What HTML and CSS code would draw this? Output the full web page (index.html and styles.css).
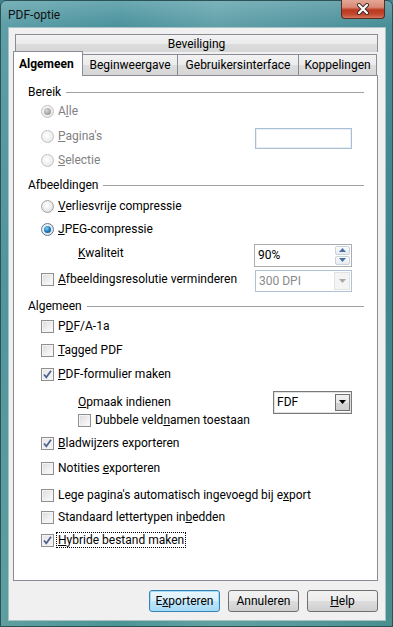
FILE: index.html
```html
<!DOCTYPE html>
<html lang="nl">
<head>
    <meta charset="UTF-8">
    <title>PDF-optie</title>
    <link rel="stylesheet" href="styles.css">
</head>
<body>
<div class="window">
    <div class="titlebar">
        <span class="title">PDF-optie</span>
        <div class="close">
            <svg width="16" height="12" viewBox="0 0 16 12">
                <path d="M4 2 L12 10 M12 2 L4 10" stroke="#3a2a2a" stroke-width="4" stroke-linecap="round"/>
                <path d="M4 2 L12 10 M12 2 L4 10" stroke="#ffffff" stroke-width="2.2" stroke-linecap="round"/>
            </svg>
        </div>
    </div>
    <div class="client">
        <div class="tabs">
            <div class="tabrow top-row">
                <div class="tab wide">Beveiliging</div>
            </div>
            <div class="tabrow">
                <div class="tab active">Algemeen</div>
                <div class="tab w95">Beginweergave</div>
                <div class="tab w121">Gebruikersinterface</div>
                <div class="tab w78">Koppelingen</div>
            </div>
        </div>
        <div class="panel">
            <div class="group"><span>Bereik</span><div class="line"></div></div>
            <div class="row opt mt3 disabled">
                <span class="radio dis-checked"></span><span class="lbl">A<u>l</u>le</span>
            </div>
            <div class="row opt mt9 disabled">
                <span class="radio"></span><span class="lbl"><u>P</u>agina's</span>
                <div class="ctl textbox"></div>
            </div>
            <div class="row opt mt8 disabled">
                <span class="radio"></span><span class="lbl"><u>S</u>electie</span>
            </div>

            <div class="group mt9"><span>Afbeeldingen</span><div class="line"></div></div>
            <div class="row opt mt5">
                <span class="radio"></span><span class="lbl"><u>V</u>erliesvrije compressie</span>
            </div>
            <div class="row opt mt7">
                <span class="radio checked"></span><span class="lbl"><u>J</u>PEG-compressie</span>
            </div>
            <div class="row sub mt8">
                <span><u>K</u>waliteit</span>
                <div class="ctl spin">
                    <span class="value">90%</span>
                    <div class="spin-btns">
                        <div class="spin-btn"><svg width="7" height="4" viewBox="0 0 7 4"><path d="M0 4 L3.5 0 L7 4 Z" fill="#4a6fa5"/></svg></div>
                        <div class="spin-btn"><svg width="7" height="4" viewBox="0 0 7 4"><path d="M0 0 L3.5 4 L7 0 Z" fill="#4a6fa5"/></svg></div>
                    </div>
                </div>
            </div>
            <div class="row opt mt10">
                <span class="check"></span><span class="lbl"><u>A</u>fbeeldingsresolutie verminderen</span>
                <div class="ctl combo dis">
                    <span class="value">300 DPI</span>
                    <div class="arrow"><svg width="7" height="4" viewBox="0 0 7 4"><path d="M0 0 L3.5 4 L7 0 Z" fill="#a8a8a8"/></svg></div>
                </div>
            </div>

            <div class="group mt11"><span>Algemeen</span><div class="line"></div></div>
            <div class="row opt mt4">
                <span class="check"></span><span class="lbl">P<u>D</u>F/A-1a</span>
            </div>
            <div class="row opt mt8">
                <span class="check"></span><span class="lbl"><u>T</u>agged PDF</span>
            </div>
            <div class="row opt mt8">
                <span class="check on"><svg width="11" height="11" viewBox="0 0 11 11"><path d="M2 5.5 L4.3 8.3 L9 1.8" fill="none" stroke="#4d5f8e" stroke-width="1.7"/></svg></span>
                <span class="lbl"><u>P</u>DF-formulier maken</span>
            </div>
            <div class="row sub mt12">
                <span><u>O</u>pmaak indienen</span>
                <div class="ctl combo fdf">
                    <span class="value">FDF</span>
                    <div class="arrow"><svg width="7" height="4" viewBox="0 0 7 4"><path d="M0 0 L3.5 4 L7 0 Z" fill="#000"/></svg></div>
                </div>
            </div>
            <div class="row sub mt2">
                <span class="check"></span><span class="lbl">Dubbele veld<u>n</u>amen toestaan</span>
            </div>
            <div class="row opt mt7">
                <span class="check on"><svg width="11" height="11" viewBox="0 0 11 11"><path d="M2 5.5 L4.3 8.3 L9 1.8" fill="none" stroke="#4d5f8e" stroke-width="1.7"/></svg></span>
                <span class="lbl"><u>B</u>ladwijzers exporteren</span>
            </div>
            <div class="row opt mt9">
                <span class="check"></span><span class="lbl">Notities <u>e</u>xporteren</span>
            </div>
            <div class="row opt mt11">
                <span class="check"></span><span class="lbl">Lege pagina's automatisch ingevoegd bij e<u>x</u>port</span>
            </div>
            <div class="row opt mt6">
                <span class="check"></span><span class="lbl">Standaard lettertypen in<u>b</u>edden</span>
            </div>
            <div class="row opt mt7">
                <span class="check on"><svg width="11" height="11" viewBox="0 0 11 11"><path d="M2 5.5 L4.3 8.3 L9 1.8" fill="none" stroke="#4d5f8e" stroke-width="1.7"/></svg></span>
                <span class="lbl focus"><u>H</u>ybride bestand maken</span>
            </div>
        </div>
        <div class="buttons">
            <button class="btn default">E<u>x</u>porteren</button>
            <button class="btn">Annuleren</button>
            <button class="btn"><u>H</u>elp</button>
        </div>
    </div>
</div>
</body>
</html>
```
FILE: styles.css
```css
body {
    margin: 0;
    width: 393px;
    height: 627px;
    overflow: hidden;
    font-family: Roboto, "Liberation Sans", sans-serif;
    font-size: 12px;
    color: #000;
    background: #3d8791;
}

.window {
    width: 393px;
    height: 627px;
    box-sizing: border-box;
    display: flex;
    flex-direction: column;
    border: 1px solid #2a5257;
    border-radius: 6px 6px 0 0;
    padding: 0 6px 5px 7px;
    background: linear-gradient(90deg, rgba(255,255,255,0.10), rgba(255,255,255,0) 30%, rgba(255,255,255,0.12) 55%, rgba(0,0,0,0.04) 100%),
                linear-gradient(180deg, #6aa8b1 0, #4b939d 4%, #3f8993 45%, #4c9594 100%);
}

.titlebar {
    height: 27px;
    display: flex;
    align-items: flex-start;
}

.title {
    margin-top: 7px;
    color: #101010;
    font-size: 12px;
}

.close {
    margin-left: auto;
    margin-right: 1px;
    margin-top: -1px;
    width: 44px;
    height: 19px;
    box-sizing: border-box;
    border: 1px solid #5a2b22;
    border-top: none;
    border-radius: 0 0 4px 4px;
    background: linear-gradient(180deg, #e3a795 0, #d98a76 40%, #b9391f 55%, #c2482d 80%, #d6765c 100%);
    display: flex;
    align-items: center;
    justify-content: center;
}

.client {
    flex: 1;
    display: flex;
    flex-direction: column;
    background: #f0f0f0;
    border: 1px solid #a9c2c6;
    padding: 6px 7px 8px 4px;
}

.tabs {
    display: flex;
    flex-direction: column;
}

.tabrow {
    display: flex;
    align-items: flex-end;
    height: 23px;
}

.top-row {
    height: 18px;
    padding-left: 2px;
}

.tab {
    box-sizing: border-box;
    height: 21px;
    border: 1px solid #898c95;
    border-bottom: none;
    border-left: none;
    background: linear-gradient(180deg, #f2f2f2 0, #ebebeb 50%, #dddddd 51%, #d6d6d6 100%);
    display: flex;
    align-items: center;
    justify-content: center;
    color: #000;
}

.tab.wide {
    width: 363px;
    height: 18px;
    border-left: 1px solid #898c95;
}

.tab.active {
    width: 70px;
    height: 25px;
    margin-bottom: -1px;
    border-left: 1px solid #898c95;
    background: #fff;
    font-weight: bold;
    position: relative;
    z-index: 1;
    justify-content: flex-start;
    padding-left: 5px;
    padding-bottom: 1px;
}

.w95 { width: 95px; }
.w121 { width: 121px; }
.w78 { width: 78px; }

.panel {
    width: 365px;
    height: 506px;
    box-sizing: border-box;
    background: #fff;
    border: 1px solid #898c95;
    padding: 8px 13px 0 14px;
    display: flex;
    flex-direction: column;
}

.group {
    display: flex;
    align-items: center;
    height: 16px;
}

.group .line {
    flex: 1;
    margin-left: 5px;
    border-top: 1px solid #a0a0a0;
}

.row {
    display: flex;
    align-items: center;
    height: 16px;
}

.opt { padding-left: 13px; }
.sub { padding-left: 50px; }

.lbl { margin-left: 4px; }

.disabled { color: #808080; }

.mt2 { margin-top: 2px; }
.mt3 { margin-top: 3px; }
.mt4 { margin-top: 4px; }
.mt5 { margin-top: 5px; }
.mt6 { margin-top: 6px; }
.mt7 { margin-top: 7px; }
.mt8 { margin-top: 8px; }
.mt9 { margin-top: 9px; }
.mt10 { margin-top: 10px; }
.mt11 { margin-top: 11px; }
.mt12 { margin-top: 12px; }

.radio {
    width: 13px;
    height: 13px;
    box-sizing: border-box;
    border-radius: 50%;
    border: 1px solid #a3a3a3;
    background: radial-gradient(circle at 45% 40%, #ffffff 0, #f0f0f0 40%, #d4d4d4 100%);
    display: flex;
    align-items: center;
    justify-content: center;
    flex-shrink: 0;
}

.disabled .radio {
    border-color: #c2c2c2;
    background: radial-gradient(circle at 45% 40%, #ffffff 0, #f4f4f4 40%, #e2e2e2 100%);
}

.radio.checked {
    border-color: #5b7c9e;
}

.radio.checked::after {
    content: "";
    width: 7px;
    height: 7px;
    border-radius: 50%;
    background: radial-gradient(circle at 40% 35%, #7fd0ff 0, #1e7bc0 50%, #0d3f66 100%);
}

.radio.dis-checked::after {
    content: "";
    width: 7px;
    height: 7px;
    border-radius: 50%;
    background: radial-gradient(circle at 40% 35%, #d8d8d8 0, #a4a4a4 60%, #8c8c8c 100%);
}

.check {
    width: 13px;
    height: 13px;
    box-sizing: border-box;
    border: 1px solid #8f8f8f;
    background: linear-gradient(135deg, #d9d9d9 0, #f1f1f1 60%, #fbfbfb 100%);
    box-shadow: inset 0 0 0 1px #f4f4f4;
    display: flex;
    align-items: center;
    justify-content: center;
    flex-shrink: 0;
}

.check.on {
    background: linear-gradient(135deg, #e6e6e6 0, #f6f6f6 100%);
}

.focus {
    outline: 1px dotted #000;
    outline-offset: 0;
    padding: 0 1px;
    margin-left: 3px;
}

.ctl {
    margin-left: auto;
    margin-right: 12px;
    box-sizing: border-box;
    background: #fff;
    flex-shrink: 0;
}

.textbox {
    width: 97px;
    height: 21px;
    margin-top: 4px;
    border: 1px solid #a9bfd6;
    box-shadow: inset 0 0 0 1px #e8eef4;
}

.spin {
    width: 98px;
    height: 23px;
    margin-top: 4px;
    border: 1px solid #abadb3;
    display: flex;
    align-items: center;
    padding-left: 3px;
}

.spin .value { flex: 1; }

.spin-btns {
    display: flex;
    flex-direction: column;
    gap: 1px;
    margin-right: 1px;
}

.spin-btn {
    width: 15px;
    height: 9px;
    box-sizing: border-box;
    border: 1px solid #c9d2dd;
    border-radius: 2px;
    background: linear-gradient(180deg, #fbfbfb, #e6ebf0);
    display: flex;
    align-items: center;
    justify-content: center;
}

.combo {
    height: 22px;
    display: flex;
    align-items: center;
    padding-left: 3px;
}

.combo .value { flex: 1; }

.combo.dis {
    width: 97px;
    margin-top: 3px;
    border: 1px solid #afc3d8;
    color: #8a8a8a;
}

.combo .arrow {
    width: 16px;
    height: 18px;
    box-sizing: border-box;
    margin-right: 1px;
    display: flex;
    align-items: center;
    justify-content: center;
}

.combo.dis .arrow {
    background: #f4f4f4;
    border: 1px solid #e3e3e3;
}

.combo.fdf {
    width: 79px;
    height: 23px;
    border: 1px solid #7a7a7a;
    box-shadow: inset 0 0 0 1px #e0e0e0;
}

.combo.fdf .arrow {
    width: 15px;
    height: 17px;
    border: 1px solid #707070;
    background: linear-gradient(180deg, #f2f2f2 0, #e6e6e6 50%, #d4d4d4 51%, #cfcfcf 100%);
}

.buttons {
    display: flex;
    justify-content: flex-end;
    gap: 8px;
    margin-top: 9px;
}

.btn {
    width: 71px;
    height: 22px;
    box-sizing: border-box;
    border: 1px solid #707070;
    border-radius: 3px;
    background: linear-gradient(180deg, #f2f2f2 0, #ebebeb 50%, #dddddd 51%, #cfcfcf 100%);
    font-family: inherit;
    font-size: 12px;
    color: #000;
    padding: 0;
}

.btn.default {
    border-color: #3c7fb1;
    box-shadow: inset 0 0 0 1px #9ee0fb;
    background: linear-gradient(180deg, #eaf6fd 0, #d9f0fc 50%, #bee6fd 51%, #a7d9f5 100%);
}
```
